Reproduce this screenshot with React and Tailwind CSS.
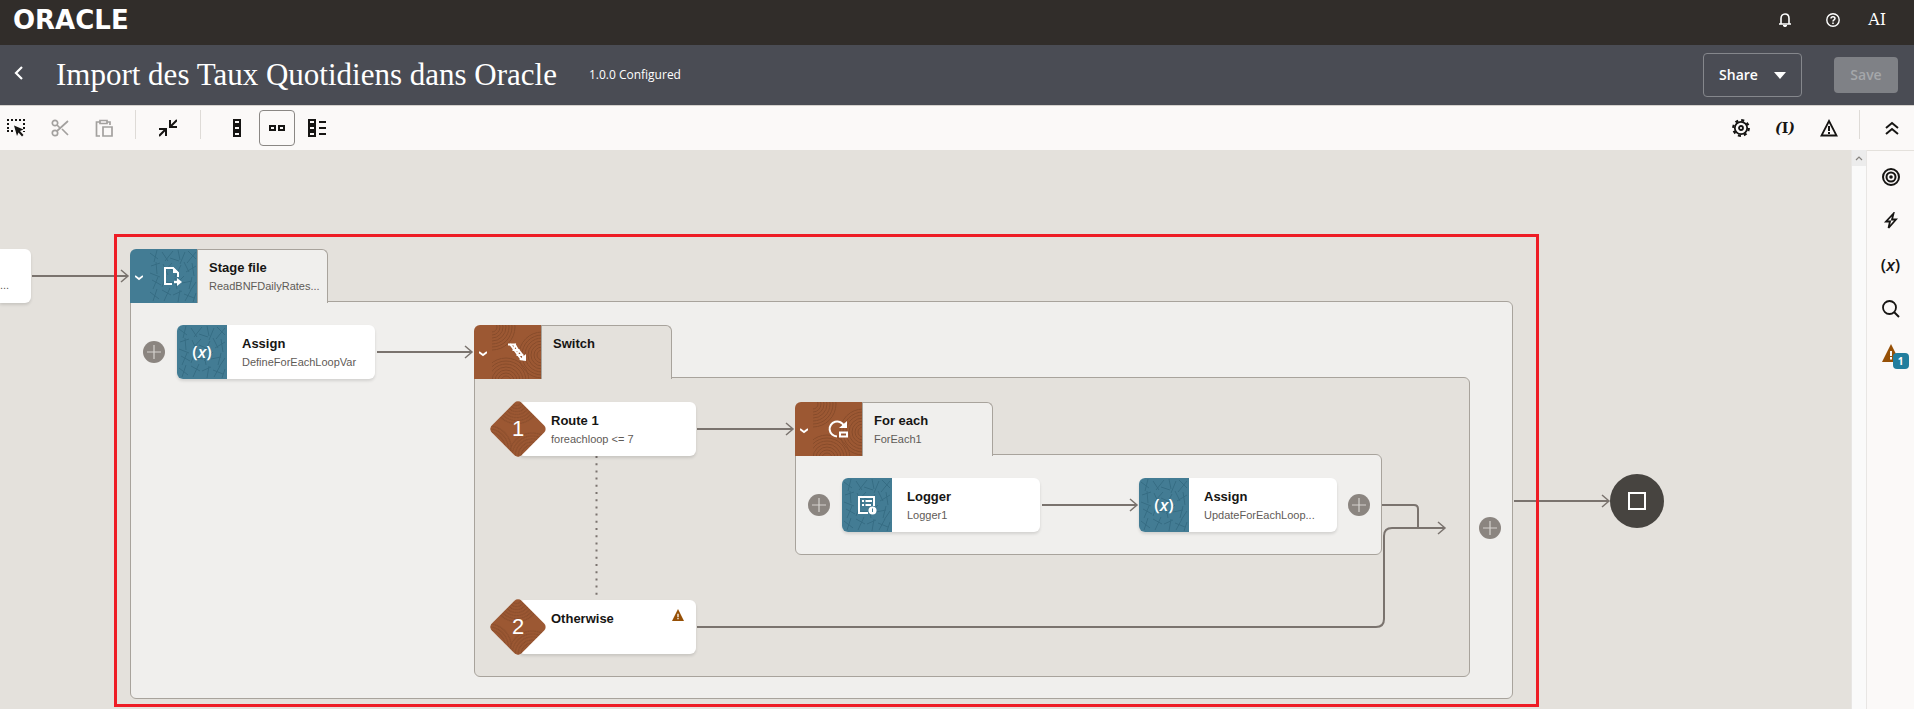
import React from 'react';

// Canvas coordinates, in px from the canvas' top left corner
const GROUPS = [
  {
    id: 'stage', title: 'Stage file', subtitle: 'ReadBNFDailyRates...', icon: 'stage', tone: 'teal',
    x: 130, y: 99, width: 1383, height: 450, surface: 'bg-[#f0efed]',
  },
  {
    id: 'switch', title: 'Switch', subtitle: '', icon: 'switch', tone: 'brown',
    x: 474, y: 175, width: 996, height: 352, surface: 'bg-[#e4e1dc]',
  },
  {
    id: 'foreach', title: 'For each', subtitle: 'ForEach1', icon: 'loop', tone: 'brown',
    x: 795, y: 252, width: 587, height: 153, surface: 'bg-[#f0efed]',
  },
];

const ACTIONS = [
  { id: 'assign-1', title: 'Assign', subtitle: 'DefineForEachLoopVar', icon: 'variable', x: 177, y: 175 },
  { id: 'logger-1', title: 'Logger', subtitle: 'Logger1', icon: 'logger', x: 842, y: 328 },
  { id: 'assign-2', title: 'Assign', subtitle: 'UpdateForEachLoop...', icon: 'variable', x: 1139, y: 328 },
];

const ROUTES = [
  { id: 1, title: 'Route 1', subtitle: 'foreachloop <= 7', x: 490, y: 252 },
  { id: 2, title: 'Otherwise', subtitle: '', warning: true, x: 490, y: 450 },
];

const ADD_POINTS = [
  { x: 143, y: 191 },
  { x: 808, y: 344 },
  { x: 1348, y: 344 },
  { x: 1479, y: 367 },
];

const ARROWS = [
  { x1: 32, x2: 128, y: 126 },
  { x1: 377, x2: 472, y: 202 },
  { x1: 697, x2: 793, y: 279 },
  { x1: 1042, x2: 1137, y: 355 },
  { x1: 1514, x2: 1609, y: 351 },
];

const Icon = ({ size = 18, viewBox = '0 0 18 18', children }) => (
  <svg width={size} height={size} viewBox={viewBox} fill="none" stroke="currentColor" strokeWidth="2" aria-hidden="true">
    {children}
  </svg>
);

const SelectIcon = () => (
  <Icon>
    <path d="M0 1h18M1 4v9M0 12h7M17 4v9" strokeDasharray="2 2" />
    <path d="M7 6.500l9.500 4-3.500 1.500 3.500 4-1.500 1.500-3.500-4-1.500 3.500z" fill="currentColor" stroke="none" />
  </Icon>
);

const CutIcon = () => (
  <Icon>
    <circle cx="4" cy="4" r="2.700" strokeWidth="1.700" />
    <circle cx="4" cy="14" r="2.700" strokeWidth="1.700" />
    <path d="M6 12L17 2M6 6l3 3M11 10l6 6" strokeWidth="1.700" />
  </Icon>
);

const PasteIcon = () => (
  <Icon>
    <path d="M5 17H1.500V3H5M12 3h3v3M5 1.500h7v3H5zM8 8h9v9H8z" strokeWidth="1.700" />
  </Icon>
);

const CollapseIcon = () => (
  <Icon>
    <path d="M18 1l-7 7M11 1v7h7M0 17l7-7M0 10h7v7" />
  </Icon>
);

const VerticalIcon = () => (
  <Icon>
    <path d="M6 1h6v4H6zM6 7h6v4H6zM6 13h6v4H6z" />
  </Icon>
);

const HorizontalIcon = () => (
  <Icon>
    <path d="M2 7h5v4H2zM11 7h5v4h-5z" />
  </Icon>
);

const ListIcon = () => (
  <Icon>
    <path d="M1 1h6v4H1zM1 7h6v4H1zM1 13h6v4H1zM11 3h7M11 9h7M11 15h7" />
  </Icon>
);

const GearIcon = () => (
  <Icon>
    <circle cx="9" cy="9" r="6.200" strokeWidth="1.800" />
    <circle cx="9" cy="9" r="7.800" strokeWidth="2.200" strokeDasharray="3.060 3.060" />
    <circle cx="9" cy="9" r="2" strokeWidth="1.800" />
  </Icon>
);

const AlertIcon = () => (
  <Icon>
    <path d="M9 2L16.500 16.500h-15z" strokeWidth="1.800" />
    <path d="M9 7v5M9 13v2" />
  </Icon>
);

const ChevronsIcon = () => (
  <Icon size={14} viewBox="0 0 14 14">
    <path d="M1 7l6-5 6 5M1 13l6-5 6 5" />
  </Icon>
);

const TargetIcon = () => (
  <Icon>
    <circle cx="9" cy="9" r="8" />
    <circle cx="9" cy="9" r="4.500" />
    <circle cx="9" cy="9" r="1.800" fill="currentColor" stroke="none" />
  </Icon>
);

const BoltIcon = () => (
  <Icon>
    <path d="M11.500 1.500L4 9.500h4L6.500 16l7.500-8.500h-4z" strokeWidth="1.800" />
  </Icon>
);

const SearchIcon = () => (
  <Icon>
    <circle cx="7.500" cy="7.500" r="6.500" strokeWidth="1.800" />
    <path d="M12 12l5 5" />
  </Icon>
);

const WarningIcon = ({ size = 18 }) => (
  <Icon size={size}>
    <path d="M9 0l9 18H0z" fill="#965006" stroke="none" />
    <path d="M9 7v5M9 13v2.500" stroke="#fbf9f8" />
  </Icon>
);

const BellIcon = () => (
  <Icon size={14} viewBox="0 0 14 14">
    <path d="M1 11h12M3 11V5.500C3 3 4.500 1 7 1s4 2 4 4.500V11" strokeWidth="1.600" />
    <path d="M5 12.500h4L7 14z" fill="currentColor" strokeWidth="1" />
  </Icon>
);

const HelpIcon = () => (
  <Icon size={14} viewBox="0 0 14 14">
    <circle cx="7" cy="7" r="6.200" strokeWidth="1.400" />
    <path d="M5 5.500C5 3 9 3 9 5.500 9 7 7 6.800 7 8.500M7 9.500V11" strokeWidth="1.500" />
  </Icon>
);

const VariableIcon = ({ letter = 'x' }) => (
  <span className="font-['Open_Sans',sans-serif] text-[17px] leading-5 font-semibold">
    (<i>{letter}</i>)
  </span>
);

const StageIcon = () => (
  <Icon size={20} viewBox="0 0 20 20">
    <path d="M9 18H2V2h8l5 5v4" />
    <path d="M10 1v6h6z" fill="currentColor" stroke="none" />
    <path d="M11 16h4" strokeWidth="2.400" />
    <path d="M14 12l5 4-5 4z" fill="currentColor" stroke="none" />
  </Icon>
);

const SwitchIcon = () => (
  <Icon size={20} viewBox="0 0 20 20">
    <path d="M1 2.500h7L6.500 8h5L10.500 13h5L17 18" strokeWidth="1.800" />
    <path d="M3 2l11 15M7.500 2l3.500 6M11.500 8l4 5" strokeWidth="2" />
    <path d="M19 12v7l-7-1z" fill="currentColor" stroke="none" />
  </Icon>
);

const LoopIcon = () => (
  <Icon size={20} viewBox="0 0 20 20">
    <path d="M9 17.500A7.500 7.500 0 1 1 16 7" />
    <path d="M19 2v7h-8z" fill="currentColor" stroke="none" />
    <path d="M12 13.500h7v4h-7z" />
  </Icon>
);

const LoggerIcon = () => (
  <Icon size={20} viewBox="0 0 20 20">
    <path d="M11 18H2V2h15v9" />
    <path d="M5 6h2M8.500 6H15M5 10h2M8.500 10H14" />
    <circle cx="15.500" cy="15.500" r="4" fill="currentColor" stroke="none" />
    <path d="M15.500 13.500v3.500" stroke="#437c94" strokeWidth="1" />
  </Icon>
);

const NODE_ICONS = {
  variable: VariableIcon,
  stage: StageIcon,
  switch: SwitchIcon,
  loop: LoopIcon,
  logger: LoggerIcon,
};

// Tile textures, shared by every node through <pattern> ids
const Textures = () => (
  <svg className="absolute size-0" aria-hidden="true">
    <defs>
      <pattern id="texture-teal" width="50" height="54" patternUnits="userSpaceOnUse">
        <path
          d="M2 4l8 6M9 1l-3 12M14 3l6 9M25 2l-8 10M22 9l9 3M30 1l2 10M37 3l-5 12M40 2l8 8M48 3l-9 11M3 17l9-3M8 13l1 12M2 24l10 4M15 15l5 11M24 14l-8 9M22 20l9 4M33 16l-6 12M36 13l5 10M48 17l-10 6M44 14l2 13M4 31l9 5M10 28l-5 12M18 27l-4 11M17 33l9 1M27 29l2 11M36 27l-9 9M34 34l10-2M44 28l-3 12M48 33l-6 9M2 43l9 7M9 40l-4 12M14 41l9 5M22 39l-6 13M25 46l9-4M32 41l-2 12M36 45l10 4M43 41l-6 11M48 44l-3 9"
          fill="none" stroke="#356c83" strokeWidth="1"
        />
      </pattern>
      <pattern id="texture-brown" width="50" height="54" patternUnits="userSpaceOnUse">
        <g fill="none" stroke="#874b2a" strokeWidth="1">
          {[5, 8, 11, 14, 17, 20, 23].map(r => (
            <React.Fragment key={r}>
              <circle cx="0" cy="2" r={r} />
              <circle cx="50" cy="30" r={r} />
              <circle cx="14" cy="56" r={r} />
            </React.Fragment>
          ))}
        </g>
      </pattern>
    </defs>
  </svg>
);

const Texture = ({ tone }) => (
  <svg className="absolute inset-0 size-full" aria-hidden="true">
    <rect width="100%" height="100%" fill={tone === 'teal' ? 'url(#texture-teal)' : 'url(#texture-brown)'} />
  </svg>
);

const NodeText = ({ title, subtitle }) => (
  <div className="font-['Liberation_Sans',Arial,sans-serif] whitespace-nowrap">
    <h3 className="text-[13px] leading-5 font-bold text-[#161513]">{title}</h3>
    <p className="text-[11px] leading-4 text-[#5f5b57]">{subtitle}</p>
  </div>
);

const Group = ({ group }) => {
  const GroupIcon = NODE_ICONS[group.icon];
  const tileColor = group.tone === 'teal' ? 'bg-[#437c94]' : 'bg-[#9c5833]';

  return (
    <section className="absolute" style={{ left: group.x, top: group.y, width: group.width }}>
      <div className="relative z-10 flex h-[54px] w-[198px]">
        <div className={`flex w-[67px] rounded-tl-md text-white ${tileColor}`}>
          <button type="button" aria-label={`Collapse ${group.title}`} className="flex w-[18px] items-center justify-center pt-1">
            <Icon size={8} viewBox="0 0 8 8"><path d="M0 2l4 3 4-3" strokeWidth="1.800" /></Icon>
          </button>
          <div className="relative flex flex-1 items-center justify-center">
            <Texture tone={group.tone} />
            <span className="relative flex"><GroupIcon /></span>
          </div>
        </div>
        <div className={`flex-1 overflow-hidden rounded-tr-md border border-b-0 border-[#a8a39c] pt-2 pl-[11px] ${group.surface}`}>
          <NodeText title={group.title} subtitle={group.subtitle} />
        </div>
      </div>
      <div
        className={`-mt-[2px] rounded-md rounded-tl-none border border-[#a8a39c] ${group.surface}`}
        style={{ height: group.height - 52 }}
      />
    </section>
  );
};

const Action = ({ action }) => {
  const ActionIcon = NODE_ICONS[action.icon];

  return (
    <article
      className="absolute flex h-[54px] w-[198px] overflow-hidden rounded-md bg-white shadow-[0_2px_3px_rgba(0,0,0,0.12)]"
      style={{ left: action.x, top: action.y }}
    >
      <div className="relative flex w-[50px] items-center justify-center bg-[#437c94] text-white">
        <Texture tone="teal" />
        <span className="relative flex"><ActionIcon /></span>
      </div>
      <div className="flex-1 pt-[9px] pl-[15px]">
        <NodeText title={action.title} subtitle={action.subtitle} />
      </div>
    </article>
  );
};

const Route = ({ route }) => (
  <article className="absolute w-[206px] pl-7" style={{ left: route.x, top: route.y }}>
    <div className="flex h-[54px] justify-between rounded-md bg-white pt-[9px] pr-3 pl-[33px] shadow-[0_2px_3px_rgba(0,0,0,0.12)]">
      <NodeText title={route.title} subtitle={route.subtitle} />
      {route.warning && <WarningIcon size={12} />}
    </div>
    <div className="absolute top-[6px] left-[7px] size-[42px] rotate-45 overflow-hidden rounded-[5px] bg-[#9c5833]">
      <Texture tone="brown" />
    </div>
    <span className="absolute top-[13px] left-[7px] w-[42px] text-center font-['Liberation_Sans',Arial,sans-serif] text-[22px] leading-7 text-white">
      {route.id}
    </span>
  </article>
);

const Connectors = () => (
  <svg className="absolute inset-0 size-full" fill="none" stroke="#7a736e" strokeWidth="2" aria-hidden="true">
    {ARROWS.map(({ x1, x2, y }) => (
      <g key={x1}>
        <path d={`M${x1} ${y}H${x2}`} />
        <path d={`M${x2 - 7} ${y - 6}l7 6-7 6`} strokeWidth="1.500" />
      </g>
    ))}
    <path d="M697 477H1376q8 0 8-8V386q0-8 8-8H1445" />
    <path d="M1382 355H1414q4 0 4 4V378" />
    <path d="M1438 372l7 6-7 6" strokeWidth="1.500" />
    <path d="M596.500 306V450" strokeDasharray="2 5.200" />
  </svg>
);

const Divider = () => <span className="h-[29px] w-px bg-[#dedbd7]" />;

const ToolButton = ({ label, className = 'w-8', children, ...rest }) => (
  <button type="button" aria-label={label} className={`flex h-9 items-center justify-center ${className}`} {...rest}>
    {children}
  </button>
);

const Toolbar = () => (
  <div className="flex h-[45px] justify-between border-t border-[#d5d2ce] bg-[#fbf9f8] pt-1 pr-[6px] text-[#161513]">
    <div className="flex">
      <div className="flex gap-3 pr-[15px]">
        <ToolButton label="Select"><SelectIcon /></ToolButton>
        <ToolButton label="Cut" disabled className="w-8 text-[#a3a19f]"><CutIcon /></ToolButton>
        <ToolButton label="Paste" disabled className="w-8 text-[#a3a19f]"><PasteIcon /></ToolButton>
      </div>
      <Divider />
      <div className="px-4"><ToolButton label="Collapse all"><CollapseIcon /></ToolButton></div>
      <Divider />
      <div className="flex gap-1 pl-[18px]">
        <ToolButton label="Vertical layout" className="w-9"><VerticalIcon /></ToolButton>
        <ToolButton label="Horizontal layout" aria-pressed="true" className="w-9 rounded border border-[#8a8784]">
          <HorizontalIcon />
        </ToolButton>
        <ToolButton label="List layout" className="w-9"><ListIcon /></ToolButton>
      </div>
    </div>
    <div className="flex">
      <div className="flex gap-3 pr-[14px]">
        <ToolButton label="Settings"><GearIcon /></ToolButton>
        <ToolButton label="Tracking variables">
          <span className="font-['DejaVu_Serif',serif] text-sm leading-5 font-bold">
            <i>(</i>I<i>)</i>
          </span>
        </ToolButton>
        <ToolButton label="Errors"><AlertIcon /></ToolButton>
      </div>
      <Divider />
      <div className="pl-4"><ToolButton label="Hide header"><ChevronsIcon /></ToolButton></div>
    </div>
  </div>
);

const SidePanel = () => (
  <aside className="flex w-[47px] flex-col items-center gap-2 border-t border-[#e4e1dc] bg-[#fbf9f8] pt-2 text-[#161513]">
    <ToolButton label="Tracking"><TargetIcon /></ToolButton>
    <ToolButton label="Actions"><BoltIcon /></ToolButton>
    <ToolButton label="Variables"><VariableIcon /></ToolButton>
    <ToolButton label="Search"><SearchIcon /></ToolButton>
    <ToolButton label="Warnings" className="relative w-8">
      <WarningIcon />
      <span className="absolute right-[-2px] bottom-0.5 flex size-4 items-center justify-center rounded bg-[#227e9e] font-['Open_Sans',sans-serif] text-[10px] leading-4 font-bold text-white">
        1
      </span>
    </ToolButton>
  </aside>
);

const Canvas = () => (
  <main className="relative flex-1 overflow-hidden bg-[#e4e1dc]">
    <Textures />
    {GROUPS.map(group => <Group key={group.id} group={group} />)}
    <Connectors />

    {/* Tail of the previous action, scrolled out on the left */}
    <article className="absolute top-[99px] left-0 flex h-[54px] w-[31px] items-end rounded-r-md bg-white pb-[10px] font-['Liberation_Sans',Arial,sans-serif] text-[11px] leading-4 text-[#5f5b57] shadow-[0_2px_3px_rgba(0,0,0,0.12)]">
      ...
    </article>

    {ACTIONS.map(action => <Action key={action.id} action={action} />)}
    {ROUTES.map(route => <Route key={route.id} route={route} />)}
    {ADD_POINTS.map(({ x, y }) => (
      <button
        key={`${x}-${y}`}
        type="button"
        aria-label="Add action"
        className="absolute flex size-[22px] items-center justify-center rounded-full bg-[#8b8580] text-[#d5d2ce]"
        style={{ left: x, top: y }}
      >
        <Icon size={14} viewBox="0 0 14 14"><path d="M7 0v14M0 7h14" strokeWidth="1.200" /></Icon>
      </button>
    ))}

    <div className="absolute top-[324px] left-[1610px] flex size-[54px] items-center justify-center rounded-full bg-[#474440]">
      <span className="size-[18px] border-2 border-white" />
    </div>
    <div className="pointer-events-none absolute top-[84px] left-[114px] z-20 h-[473px] w-[1425px] border-[3px] border-[#ee1c25]" />
  </main>
);

export default function App() {
  return (
    <div className="flex h-screen flex-col bg-white pr-[6px] font-['Open_Sans',sans-serif]">
      <header className="flex h-[45px] items-center justify-between bg-[#312d2a] pr-7 pb-[6px] pl-[13px] text-white">
        <span className="font-['DejaVu_Sans',sans-serif] text-[26px] leading-8 font-bold">ORACLE</span>
        <nav className="flex items-center">
          <button type="button" aria-label="Notifications" className="mr-[34px] flex"><BellIcon /></button>
          <button type="button" aria-label="Help" className="mr-7 flex"><HelpIcon /></button>
          <button type="button" className="font-['DejaVu_Serif',serif] text-base leading-5">AI</button>
        </nav>
      </header>

      <div className="flex h-[60px] items-center justify-between bg-[#4a4c54] pr-4 pl-[13px] text-white">
        <div className="flex items-center">
          <button type="button" aria-label="Back" className="mr-[29px] flex w-[14px] pb-1">
            <Icon size={14} viewBox="0 0 14 14"><path d="M9 1L3 7l6 6" strokeWidth="2.200" /></Icon>
          </button>
          <h1 className="font-['Liberation_Serif',serif] text-[31px] leading-10">Import des Taux Quotidiens dans Oracle</h1>
          <span className="ml-8 text-xs leading-4">1.0.0 Configured</span>
        </div>
        <div className="flex items-center gap-8">
          <button type="button" className="flex h-11 w-[99px] items-center justify-center gap-4 rounded border border-[#85878c] text-sm font-semibold">
            Share
            <svg width="12" height="7" viewBox="0 0 12 7" fill="currentColor" aria-hidden="true"><path d="M0 0h12L6 7z" /></svg>
          </button>
          <button type="button" disabled className="h-9 w-16 rounded-sm bg-[#7f8186] text-sm font-semibold text-[#a5a7aa]">
            Save
          </button>
        </div>
      </div>

      <Toolbar />

      <div className="flex min-h-0 flex-1">
        <Canvas />
        <div className="flex w-4 flex-col border-x border-[#e8e6e4] bg-[#fafafa]">
          <button type="button" aria-label="Scroll up" className="flex h-4 items-center justify-center bg-[#ececec] text-[#86837f]">
            <Icon size={8} viewBox="0 0 8 8"><path d="M1 6l3-3 3 3" strokeWidth="1.200" /></Icon>
          </button>
        </div>
        <SidePanel />
      </div>
    </div>
  );
}
